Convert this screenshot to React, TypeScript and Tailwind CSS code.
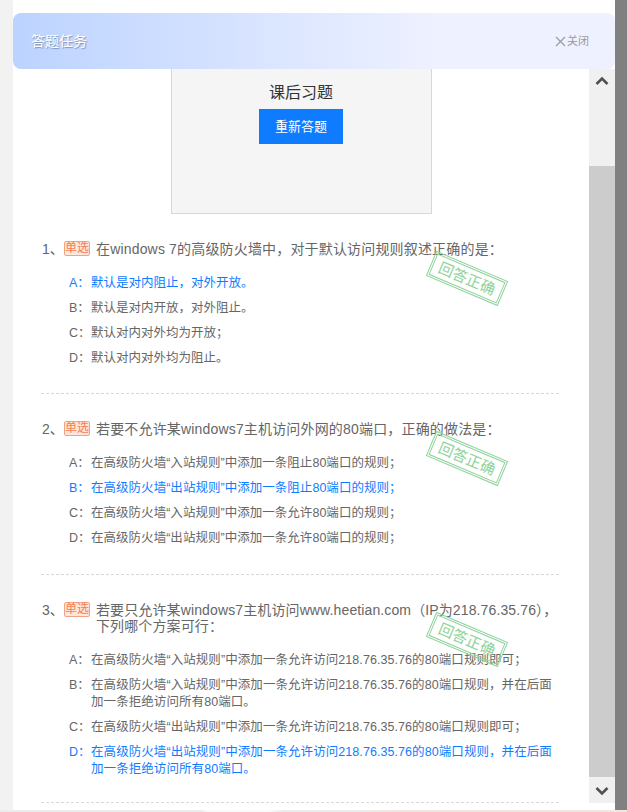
const FONT = "font-['Liberation_Sans','Noto_Sans_CJK_SC',sans-serif]";

type Opt = { k: string; t: string; ok?: boolean };
type Q = { n: number; lines: string[]; opts: Opt[]; h: string; track: string; optTrack: string };

const qs: Q[] = [
  {
    n: 1,
    lines: ["在windows 7的高级防火墙中，对于默认访问规则叙述正确的是："],
    h: "h-[153px]",
    track: "tracking-[0.17px]",
    optTrack: "tracking-normal",
    opts: [
      { k: "A", t: "默认是对内阻止，对外开放。", ok: true },
      { k: "B", t: "默认是对内开放，对外阻止。" },
      { k: "C", t: "默认对内对外均为开放；" },
      { k: "D", t: "默认对内对外均为阻止。" },
    ],
  },
  {
    n: 2,
    lines: ["若要不允许某windows7主机访问外网的80端口，正确的做法是："],
    h: "h-[154px]",
    track: "tracking-[0.17px]",
    optTrack: "tracking-[0.03px]",
    opts: [
      { k: "A", t: "在高级防火墙“入站规则”中添加一条阻止80端口的规则；" },
      { k: "B", t: "在高级防火墙“出站规则”中添加一条阻止80端口的规则；", ok: true },
      { k: "C", t: "在高级防火墙“入站规则”中添加一条允许80端口的规则；" },
      { k: "D", t: "在高级防火墙“出站规则”中添加一条允许80端口的规则；" },
    ],
  },
  {
    n: 3,
    lines: ["若要只允许某windows7主机访问www.heetian.com（IP为218.76.35.76），", "下列哪个方案可行："],
    h: "h-[201px]",
    track: "tracking-[0.12px]",
    optTrack: "tracking-[0.07px]",
    opts: [
      { k: "A", t: "在高级防火墙“入站规则”中添加一条允许访问218.76.35.76的80端口规则即可；" },
      { k: "B", t: "在高级防火墙“入站规则”中添加一条允许访问218.76.35.76的80端口规则，并在后面加一条拒绝访问所有80端口。" },
      { k: "C", t: "在高级防火墙“出站规则”中添加一条允许访问218.76.35.76的80端口规则即可；" },
      { k: "D", t: "在高级防火墙“出站规则”中添加一条允许访问218.76.35.76的80端口规则，并在后面加一条拒绝访问所有80端口。", ok: true },
    ],
  },
];

function Stamp() {
  return (
    <div className="absolute left-[387px] top-[24px] w-[78px] h-[27px] rotate-[23deg] border-[3px] border-double border-[#8fd39c] flex items-center justify-center">
      <span className="text-[15px] leading-none text-[#8ed39b]">回答正确</span>
    </div>
  );
}

function Question({ q }: { q: Q }) {
  return (
    <div className={`relative ${q.h} ml-[28px] mr-[30px] border-b border-dashed border-[#d9d9d9]`}>
      <div className="flex pl-[1px] text-[14px] leading-[16px] text-[#666666]">
        <span className="w-[22px] shrink-0">{q.n}、</span>
        <span className="w-[26px] h-[15px] shrink-0 rounded-[2px] border border-[#f3a385] bg-[#ffe6dc] text-[12px] leading-[13px] text-center text-[#f47f52]">
          单选
        </span>
        <div className={`ml-[6px] w-[462px] whitespace-nowrap ${q.track}`}>
          {q.lines.map((l) => (
            <div key={l}>{l}</div>
          ))}
        </div>
      </div>
      <div className="mt-[18px] pl-[28px] pr-[5px] flex flex-col gap-[8px]">
        {q.opts.map((o) => (
          <div
            key={o.k}
            className={`flex items-baseline text-[12.5px] leading-[17px] ${o.ok ? "text-[#0f7cff]" : "text-[#666666]"}`}
          >
            <span className="w-[22px] shrink-0">{o.k}：</span>
            <span className={`flex-1 ${q.optTrack}`}>{o.t}</span>
          </div>
        ))}
      </div>
      <Stamp />
    </div>
  );
}

function ScrollBar() {
  return (
    <div className="w-[26px] h-[734px] shrink-0 flex flex-col bg-[#f0f0f0]">
      <div className="h-[97px] flex justify-center pt-[7px]">
        <svg width="14" height="10" viewBox="0 0 14 10">
          <path d="M1.5 8 L7 2.5 L12.5 8" fill="none" stroke="#505050" strokeWidth="2.6" />
        </svg>
      </div>
      <div className="h-[611px] bg-[#cccccc]" />
      <div className="h-[26px] flex justify-center pt-[9px]">
        <svg width="14" height="10" viewBox="0 0 14 10">
          <path d="M1.5 2 L7 7.5 L12.5 2" fill="none" stroke="#505050" strokeWidth="2.6" />
        </svg>
      </div>
    </div>
  );
}

export default function App() {
  return (
    <div className={`${FONT} w-[627px] h-[812px] overflow-hidden flex flex-col bg-[#f2f2f2]`}>
      <div className="h-[810px] flex shrink-0">
        <div className="w-[13px] shrink-0 bg-[#f2f2f2]" />
        <div className="w-[602px] shrink-0 bg-white pt-[13px] flex flex-col">
          <div className="h-[56px] shrink-0 rounded-[8px] bg-gradient-to-r from-[#bcd3ff] to-[#eef1ff] to-70% flex items-center justify-between pl-[18px] pr-[26px]">
            <span className="text-[14px] text-white [text-shadow:1px_1px_1px_rgba(90,100,130,0.6)]">答题任务</span>
            <span className="flex items-center gap-[1px] text-[11px] text-[#9a9a9a]">
              <svg width="11" height="11" viewBox="0 0 11 11">
                <path d="M1 1 L10 10 M10 1 L1 10" stroke="#a0a0a0" strokeWidth="1.4" />
              </svg>
              关闭
            </span>
          </div>
          <div className="flex-1 flex items-start overflow-hidden">
            <div className="flex-1 min-w-0">
              <div className="w-[261px] h-[145px] ml-[158px] pr-[1px] border-x border-b border-[#d5d8e0] bg-[#f5f5f5] flex flex-col items-center pt-[14px]">
                <div className="text-[16px] leading-[20px] text-[#333333]">课后习题</div>
                <button className="mt-[6px] w-[84px] h-[35px] bg-[#0f7cff] text-white text-[13px]">重新答题</button>
              </div>
              <div className="pt-[27px] flex flex-col gap-[27px]">
                {qs.map((q) => (
                  <Question key={q.n} q={q} />
                ))}
              </div>
            </div>
            <ScrollBar />
          </div>
        </div>
        <div className="w-[12px] shrink-0 bg-[#808080]" />
      </div>
      <div className="h-[2px] shrink-0 bg-[linear-gradient(to_right,#ececec_0%,#ececec_32%,#fafafa_33%,#fafafa_43%,#ececec_45%,#ececec_58%,#f3e6df_62%,#f3e6df_100%)]" />
    </div>
  );
}
